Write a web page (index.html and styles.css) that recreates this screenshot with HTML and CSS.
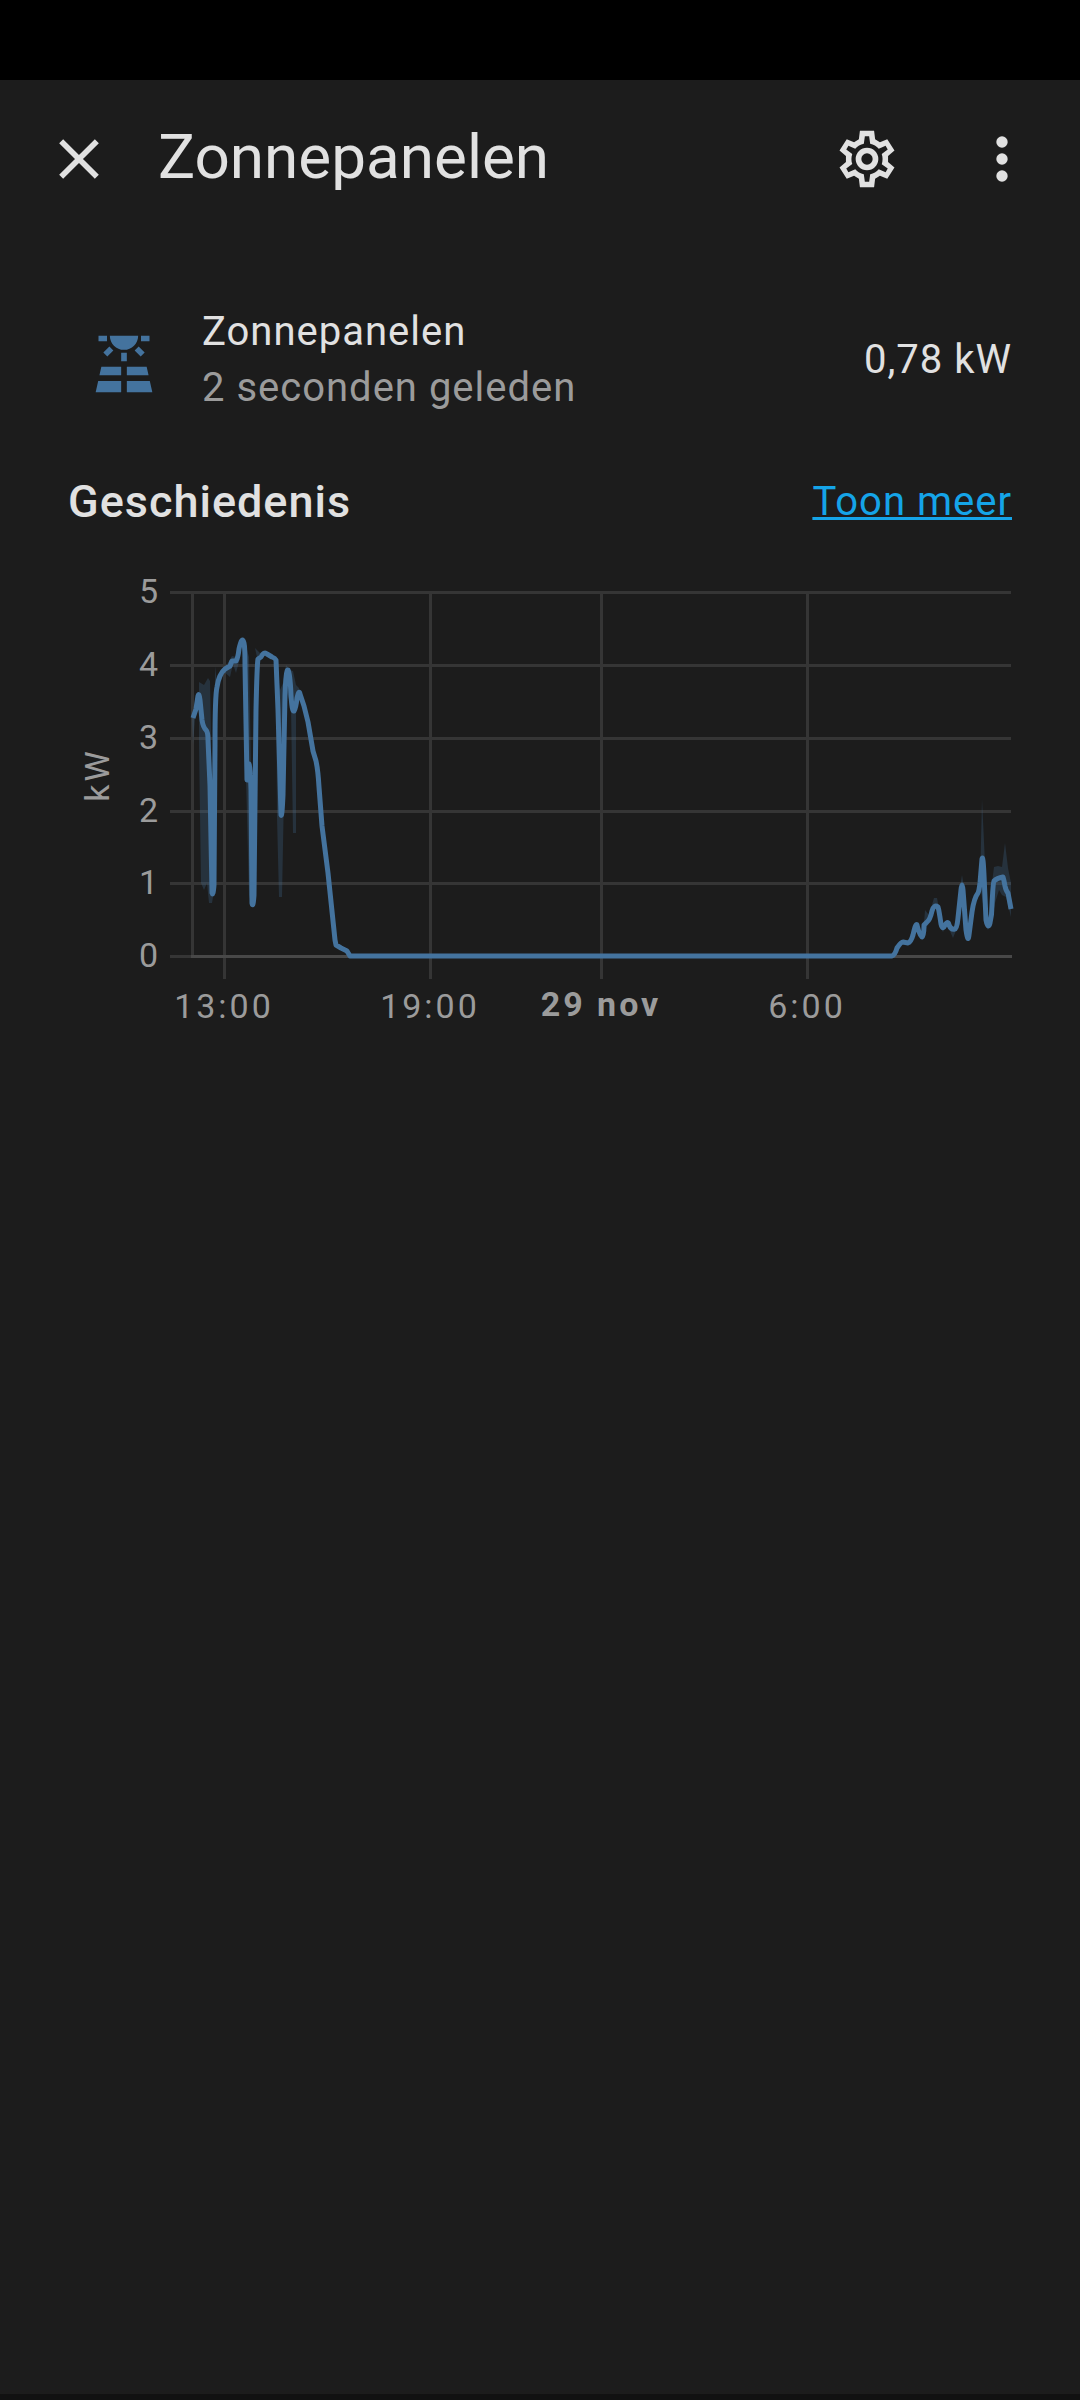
FILE: index.html
```html
<!DOCTYPE html>
<html lang="nl">
    <head>
        <meta charset="UTF-8">
        <title>Zonnepanelen</title>
        <meta name="viewport" content="width=device-width,initial-scale=1.0">
        <link rel="stylesheet" href="styles.css">
    </head>
    <body>
        <div class="statusbar"></div>
        <header class="header">
            <button class="icon-button" type="button" aria-label="Sluiten">
                <svg class="icon" viewBox="0 0 24 24"><path d="M19,6.41L17.59,5L12,10.59L6.41,5L5,6.41L10.59,12L5,17.59L6.41,19L12,13.41L17.59,19L19,17.59L13.41,12L19,6.41Z"/></svg>
            </button>
            <h1>Zonnepanelen</h1>
            <button class="icon-button" type="button" aria-label="Instellingen">
                <svg class="icon" viewBox="0 0 24 24"><path fill-rule="evenodd" d="M12,8A4,4 0 0,1 16,12A4,4 0 0,1 12,16A4,4 0 0,1 8,12A4,4 0 0,1 12,8M12,10A2,2 0 0,0 10,12A2,2 0 0,0 12,14A2,2 0 0,0 14,12A2,2 0 0,0 12,10M9.5,22L9.13,18.93L7.44,17.94L4.85,19L2.3,15L4.57,13.1V10.9L2.3,9L4.85,5L7.44,6.06L9.13,5.07L9.5,2H14.5L14.87,5.07L16.56,6.06L19.15,5L21.7,9L19.43,10.9V13.1L21.7,15L19.15,19L16.56,17.94L14.87,18.93L14.5,22H9.5M11.25,4L10.88,6.61C9.68,6.86 8.62,7.5 7.85,8.39L5.44,7.35L4.69,8.65L6.8,10.2C6.4,11.37 6.4,12.64 6.8,13.8L4.68,15.36L5.43,16.66L7.86,15.62C8.63,16.5 9.68,17.14 10.87,17.38L11.24,20H12.76L13.13,17.39C14.32,17.14 15.37,16.5 16.14,15.62L18.57,16.66L19.32,15.36L17.2,13.81C17.6,12.64 17.6,11.37 17.2,10.2L19.31,8.65L18.56,7.35L16.15,8.39C15.38,7.5 14.32,6.86 13.12,6.62L12.75,4H11.25Z"/></svg>
            </button>
            <button class="icon-button" type="button" aria-label="Menu">
                <svg class="icon" viewBox="0 0 24 24"><circle cx="12" cy="6" r="2"/><circle cx="12" cy="12" r="2"/><circle cx="12" cy="18" r="2"/></svg>
            </button>
        </header>
        <main>
            <div class="state">
                <svg class="icon state-icon" viewBox="0 0 24 24"><path d="M3.33 16H11V13H4L3.33 16M13 16H20.67L20 13H13V16M21.11 18H13V22H22L21.11 18M2 22H11V18H2.89L2 22M11 8H13V11H11V8M15.76 7.21L17.18 5.79L19.3 7.91L17.89 9.33L15.76 7.21M4.71 7.91L6.83 5.79L8.24 7.21L6.12 9.33L4.71 7.91M3 2H6V4H3V2M18 2H21V4H18V2M12 7C14.76 7 17 4.76 17 2H7C7 4.76 9.24 7 12 7Z"/></svg>
                <div class="info">
                    <div>Zonnepanelen</div>
                    <div class="secondary">2 seconden geleden</div>
                </div>
                <div class="value">0,78 kW</div>
            </div>
            <div class="history-head">
                <h2>Geschiedenis</h2>
                <a href="#">Toon meer</a>
            </div>
            <svg class="chart" viewBox="0 560 1080 480" role="img" aria-label="Geschiedenis Zonnepanelen in kW">
                <g class="grid">
                    <path d="M170 592.5H1011M170 665.5H1011M170 738.5H1011M170 811.5H1011M170 883.5H1011M170 956.5H192"/>
                    <path d="M192.5 592V956M224.5 592V979M430.5 592V979M601.5 592V979M807.5 592V979"/>
                </g>
                <path class="baseline" d="M191 956.5H1012"/>
                <!-- min/max -->
                <g class="range">
                    <path d="M192 718L195 718L193 745ZM199 682L204 685L208 678L210 681L211 733L213 897L212 903H209L207 883L204 890L201 883L199 743Z"/>
                    <path d="M215 666L218 692H215ZM223 671L230 677L233 664L236 673L240 658L232 656Z"/>
                    <path d="M246 646L249 657L251 770L252 907L249 895L246 777ZM255 648L262 655L258 662Z"/>
                    <path d="M276 660L280 690L283 683L286 665L290 670L293 671L296 685L299 688L300 694L296 712V833H293L291 706L286 690L282 897H279L277 817Z"/>
                    <path d="M923 937L925 910L929 915L934 898H937L940 914L937 906L930 919ZM941 928L943 932L946 926ZM949 929L953 938L957 928ZM959 893L962 875L965 893Z"/>
                    <path d="M980 885L982 799L986 885L984 910ZM984 923L988 930L990 923L992 883L994 867L998 866L1002 867L1005 843L1008 868L1011 883V917L1006 897L1002 895L999 890L995 903L992 920Z"/>
                </g>
                <path class="line" d="M193 718L196 709L198 696Q199 692 200 700L202 720Q203 727 206 730Q208 732 208 740L210 786L212 893Q213 897 214 885L215 745Q215 695 217 687Q219 674 225 669L230 666L232 661L236 661Q238 658 239 649Q242 635 244 643Q245 647 245 665L247 780L248 765Q250 758 251 790L252 903Q253 909 254 895L256 710Q257 664 258 659L261 657Q264 651 267 654L272 657Q275 658 276 660L278 710L281 815Q282 818 283 795L285 695Q286 669 288 670Q290 673 291 695Q292 712 294 711Q296 708 297 698Q299 689 300 694L304 706L308 722L313 751L316 761Q318 770 319 787L322 826L328 873L335 940L336 945L341 948L347 951L350 956H892Q895 955 897 948Q901 942 903 942L908 943Q911 942 913 935Q916 922 917 925Q920 937 922 937Q924 936 924 925L927 922Q930 920 932 911Q934 904 938 907Q939 910 941 924Q942 929 944 927Q948 919 949 925Q951 930 955 929Q957 929 958 918L961 890Q962 880 963 890L966 930Q968 944 969 935L972 912Q974 898 978 893Q979 891 980 883L982 859Q983 854 984 875L986 920Q988 930 990 923Q992 915 992 905Q993 883 994 881Q997 878 1003 877Q1004 880 1005 886Q1006 891 1008 893Q1009 898 1011 909"/>
                <g class="axis axis-y">
                    <text x="159" y="603">5</text>
                    <text x="159" y="676">4</text>
                    <text x="159" y="749">3</text>
                    <text x="159" y="822">2</text>
                    <text x="159" y="894">1</text>
                    <text x="159" y="967">0</text>
                </g>
                <g class="axis axis-x">
                    <text x="224" y="1018">13:00</text>
                    <text x="430" y="1018">19:00</text>
                    <text x="601" y="1016" class="day">29 nov</text>
                    <text x="807" y="1018">6:00</text>
                    <text transform="translate(109 775) rotate(-90)">kW</text>
                </g>
            </svg>
        </main>
        <div class="navbar"></div>
    </body>
</html>
```

FILE: styles.css
```css
*{
    box-sizing: border-box;
}
body{
    display: flex;
    flex-direction: column;
    min-height: 100vh;
    margin: 0;
    background: #1c1c1c;
    color: #e1e1e1;
    font-family: Roboto, "Noto Sans", sans-serif;
    font-size: 40px;
    line-height: 56px;
    letter-spacing: 1px;
}
h1, h2{
    margin: 0;
}
.statusbar{
    height: 80px;
    background: #000;
}
.header{
    display: flex;
    align-items: center;
    height: 158px;
    padding: 0 11px;
}
.header h1{
    flex: 1;
    padding: 0 0 4px 12px;
    font-size: 62px;
    font-weight: 400;
    line-height: 80px;
    letter-spacing: 0;
}
.icon-button{
    display: flex;
    align-items: center;
    justify-content: center;
    width: 135px;
    height: 135px;
    padding: 0;
    border: 0;
    background: none;
    color: inherit;
}
.icon{
    display: block;
    flex: none;
    width: 68px;
    height: 68px;
    fill: currentColor;
}
main{
    flex: 1;
}
.state{
    display: flex;
    align-items: center;
    padding: 66px 68px 0 90px;
}
.state-icon{
    margin-top: 8px;
    color: #44739e;
}
.info{
    flex: 1;
    padding-left: 44px;
}
.secondary{
    color: #9b9b9b;
}
.history-head{
    display: flex;
    align-items: center;
    justify-content: space-between;
    padding: 28px 68px 0;
    height: 144px;
}
.history-head h2{
    font-size: 45px;
    font-weight: 500;
}
.history-head a{
    color: #15a4e8;
    text-decoration-thickness: 3px;
}
.chart{
    display: block;
    width: 100%;
    height: auto;
}
.grid, .baseline, .line{
    fill: none;
    stroke-width: 3px;
}
.grid{
    stroke: #353535;
}
.baseline{
    stroke: #484848;
}
.range{
    fill: #44739e;
    opacity: 0.25;
}
.line{
    stroke: #44739e;
    stroke-width: 5px;
    stroke-linejoin: round;
}
.axis{
    fill: #9b9b9b;
    font-size: 34px;
}
.axis-y{
    text-anchor: end;
}
.axis-x{
    text-anchor: middle;
    letter-spacing: 3px;
}
.day{
    font-weight: 700;
}
.navbar{
    height: 6px;
    background: #111;
}
```
